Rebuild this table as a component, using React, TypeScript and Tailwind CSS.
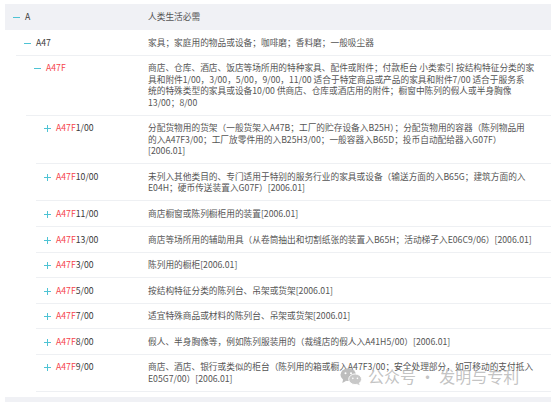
import React from "react";

type Node = {
  code: string;
  red?: string; // part of the code shown in red
  lines: string[];
  open?: boolean;
};

const children: Node[] = [
  {
    code: "1/00",
    red: "A47F",
    lines: [
      "分配货物用的货架（一般货架入A47B；工厂的贮存设备入B25H）；分配货物用的容器（陈列物品用",
      "的入A47F3/00；工厂放零件用的入B25H3/00；一般容器入B65D；投币自动配给器入G07F）",
      "[2006.01]",
    ],
  },
  {
    code: "10/00",
    red: "A47F",
    lines: [
      "未列入其他类目的、专门适用于特别的服务行业的家具或设备（输送方面的入B65G；建筑方面的入",
      "E04H；硬币传送装置入G07F）[2006.01]",
    ],
  },
  { code: "11/00", red: "A47F", lines: ["商店橱窗或陈列橱柜用的装置[2006.01]"] },
  {
    code: "13/00",
    red: "A47F",
    lines: ["商店等场所用的辅助用具（从卷筒抽出和切割纸张的装置入B65H；活动梯子入E06C9/06）[2006.01]"],
  },
  { code: "3/00", red: "A47F", lines: ["陈列用的橱柜[2006.01]"] },
  { code: "5/00", red: "A47F", lines: ["按结构特征分类的陈列台、吊架或货架[2006.01]"] },
  { code: "7/00", red: "A47F", lines: ["适宜特殊商品或材料的陈列台、吊架或货架[2006.01]"] },
  { code: "8/00", red: "A47F", lines: ["假人、半身胸像等，例如陈列服装用的（裁缝店的假人入A41H5/00）[2006.01]"] },
  {
    code: "9/00",
    red: "A47F",
    lines: [
      "商店、酒店、银行或类似的柜台（陈列用的箱或橱入A47F3/00；安全处理部分，如可移动的支付抵入",
      "E05G7/00）[2006.01]",
    ],
  },
];

// tree toggle: cyan minus (open) / plus (closed)
function Toggle({ open }: { open: boolean }) {
  return (
    <span className="w-[7px] shrink-0 flex justify-center">
      {open ? (
        <span className="block w-[7px] h-[1px] bg-[#4ec3d4] mt-[6px]" />
      ) : (
        <span className="relative block w-[7px] h-[7px] mt-[3px]">
          <span className="absolute left-0 top-[3px] w-[7px] h-[1px] bg-[#4ec3d4]" />
          <span className="absolute left-[3px] top-0 w-[1px] h-[7px] bg-[#4ec3d4]" />
        </span>
      )}
    </span>
  );
}

function Row({
  node,
  labelW,
  header,
  redCode,
}: {
  node: Node;
  labelW: string;
  header?: boolean;
  redCode?: boolean;
}) {
  return (
    <div
      className={
        header
          ? "flex bg-[#f0f1f5] py-[7.25px]"
          : "flex border-b border-[#eef0f3] py-[6.55px]"
      }
    >
      <div className={`${labelW} shrink-0 flex pl-[8px] gap-[5px]`}>
        <Toggle open={!!node.open} />
        <span className="leading-[11.5px] text-[#3a3a3a]">
          {node.red && <span className="text-[#f5434c]">{node.red}</span>}
          <span className={redCode ? "text-[#f5434c]" : ""}>{node.code}</span>
        </span>
      </div>
      <div className="flex-1 leading-[11.5px] text-[#555] whitespace-nowrap">
        {node.lines.map((l, i) => (
          <div key={i}>{l}</div>
        ))}
      </div>
    </div>
  );
}

function WeChatIcon() {
  return (
    <svg width="22" height="19" viewBox="0 0 24 20" className="shrink-0">
      <ellipse cx="9" cy="8" rx="8.5" ry="7" fill="#bdbdbd" />
      <path d="M3.5 13 L2.5 17 L7 14.5 Z" fill="#bdbdbd" />
      <circle cx="6" cy="6.5" r="1.1" fill="#fff" />
      <circle cx="12" cy="6.5" r="1.1" fill="#fff" />
      <ellipse cx="16.5" cy="13" rx="7" ry="5.8" fill="#c8c8c8" stroke="#fff" strokeWidth="1" />
      <path d="M20.5 17 L21.5 19.5 L18 18 Z" fill="#c8c8c8" />
      <circle cx="14" cy="12" r="0.9" fill="#fff" />
      <circle cx="19" cy="12" r="0.9" fill="#fff" />
    </svg>
  );
}

export default function App() {
  return (
    <div
      className="relative h-[402px] w-[558px] overflow-hidden bg-white text-[8.7px]"
      style={{ fontFamily: '"Noto Sans CJK SC", "Noto Sans", sans-serif' }}
    >
      <div className="pt-[4px] pl-[5px] pr-[7px]">
        {/* A */}
        <Row node={{ code: "A", lines: ["人类生活必需"], open: true }} labelW="w-[143px]" header />
        <div className="pl-[11px]">
          {/* A47 */}
          <Row
            node={{ code: "A47", lines: ["家具；家庭用的物品或设备；咖啡磨；香料磨；一般吸尘器"], open: true }}
            labelW="w-[132px]"
          />
          <div className="pl-[10px]">
            {/* A47F */}
            <Row
              node={{
                code: "A47F",
                open: true,
                lines: [
                  "商店、仓库、酒店、饭店等场所用的特种家具、配件或附件；付款柜台 小类索引 按结构特征分类的家",
                  "具和附件1/00，3/00，5/00，9/00，11/00 适合于特定商品或产品的家具和附件7/00 适合于服务系",
                  "统的特殊类型的家具或设备10/00 供商店、仓库或酒店用的附件；橱窗中陈列的假人或半身胸像",
                  "13/00；8/00",
                ],
              }}
              labelW="w-[122px]"
              redCode
            />
            <div className="pl-[10px]">
              {children.map((c) => (
                <Row key={c.code} node={c} labelW="w-[112px]" />
              ))}
            </div>
          </div>
        </div>
        {/* next top-level row, cut off by the window */}
        <div className="mt-[5px]">
          <Row node={{ code: "B", lines: ["作业；运输"], open: false }} labelW="w-[143px]" header />
        </div>
      </div>

      {/* watermark */}
      <div className="absolute left-[340px] top-[365px] flex items-center gap-[6px] text-[16px] leading-[22px] text-[#b4b4b4]/80 pointer-events-none">
        <WeChatIcon />
        <span>公众号 · 发明与专利</span>
      </div>
    </div>
  );
}
